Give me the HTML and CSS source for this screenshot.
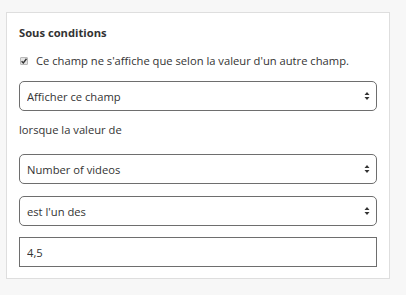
FILE: index.html
```html
<!DOCTYPE html>
<html lang="fr">
<head>
<meta charset="utf-8">
<title>Sous conditions</title>
<link rel="stylesheet" href="styles.css">
</head>
<body>
<div class="card">
  <div class="title">Sous conditions</div>
  <label class="check-row">
    <span class="checkbox"><svg width="8" height="8" viewBox="0 0 8 8"><path d="M1.6 4.2 L3.3 5.9 L6.5 1.8" fill="none" stroke="#333" stroke-width="1.4"/></svg></span>
    <span>Ce champ ne s'affiche que selon la valeur d'un autre champ.</span>
  </label>
  <div class="select-wrap">
    <select class="select"><option>Afficher ce champ</option></select>
    <svg class="arrow" width="6" height="10" viewBox="0 0 6 10"><path d="M3 1 L5.5 4 L0.5 4 Z M3 9 L5.5 6 L0.5 6 Z" fill="#333"/></svg>
  </div>
  <div class="label">lorsque la valeur de</div>
  <div class="select-wrap gap16">
    <select class="select"><option>Number of videos</option></select>
    <svg class="arrow" width="6" height="10" viewBox="0 0 6 10"><path d="M3 1 L5.5 4 L0.5 4 Z M3 9 L5.5 6 L0.5 6 Z" fill="#333"/></svg>
  </div>
  <div class="select-wrap">
    <select class="select"><option>est l'un des</option></select>
    <svg class="arrow" width="6" height="10" viewBox="0 0 6 10"><path d="M3 1 L5.5 4 L0.5 4 Z M3 9 L5.5 6 L0.5 6 Z" fill="#333"/></svg>
  </div>
  <input class="input" type="text" value="4,5">
</div>
</body>
</html>
```
FILE: styles.css
```css
* { box-sizing: border-box; }
html, body { margin: 0; padding: 0; }
body {
  background: #f7f7f7;
  font-family: "Open Sans", "Liberation Sans", sans-serif;
  font-size: 11.2px;
  color: #333;
  width: 406px;
  height: 295px;
  padding: 12px 16px 0 6px;
}
.card {
  background: #fff;
  border: 1px solid #dedede;
  padding: 11px 12px 11px 12px;
  display: flex;
  flex-direction: column;
}
.title {
  font-weight: 700;
  line-height: 16px;
  margin-top: 1px;
  margin-bottom: 12px;
}
.check-row {
  display: flex;
  align-items: center;
  gap: 8px;
  line-height: 16px;
  margin-bottom: 12px;
  padding-left: 1px;
}
.checkbox {
  width: 8px;
  height: 8px;
  border: 1px solid #b8b8b8;
  background: #e4e4e4;
  border-radius: 1px;
  display: flex;
  align-items: center;
  justify-content: center;
  position: relative;
}
.checkbox svg { position: absolute; left: -1px; top: -1px; }
.select-wrap {
  position: relative;
  height: 30px;
  margin-bottom: 12px;
}
.select-wrap.gap16 { margin-top: 5px; }
.select {
  appearance: none;
  -webkit-appearance: none;
  width: 100%;
  height: 30px;
  border: 1px solid #6e6e6e;
  border-radius: 5px;
  background: #fff;
  font-family: inherit;
  font-size: 11.2px;
  color: #333;
  padding: 0 20px 0 7px;
  margin: 0;
}
.arrow {
  position: absolute;
  right: 7px;
  top: 10px;
}
.label {
  line-height: 16px;
  margin-top: -1px;
  margin-bottom: 11px;
}
.input {
  width: 100%;
  height: 30px;
  border: 1px solid #6e6e6e;
  border-radius: 0;
  font-family: inherit;
  font-size: 11.2px;
  color: #333;
  padding: 0 7px;
  margin: -1px 0 0 0;
  background: #fff;
}
```
